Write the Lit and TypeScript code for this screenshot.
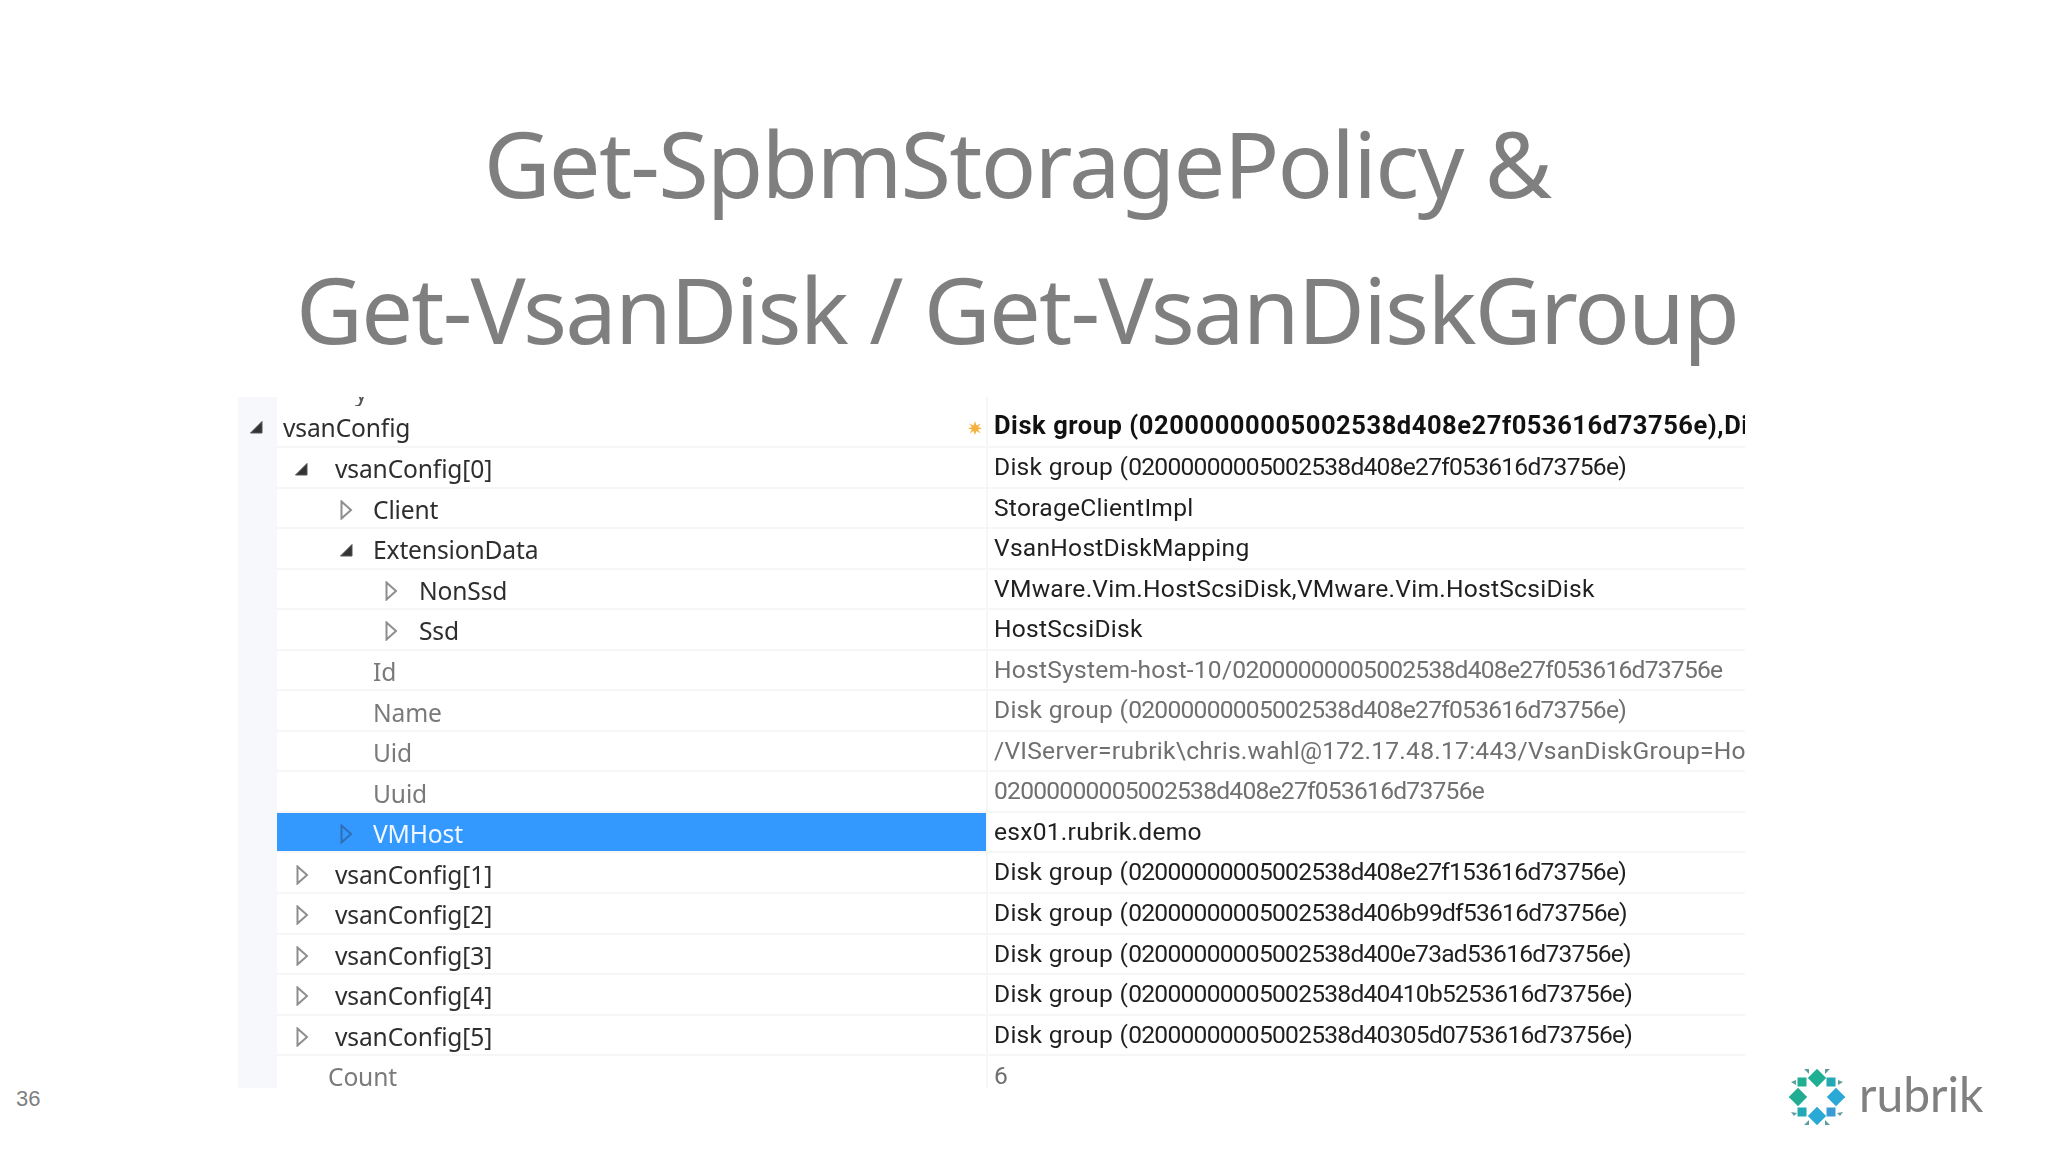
import { LitElement, css, html, svg } from 'lit';
import { customElement } from 'lit/decorators.js';

type Icon = 'open' | 'closed' | '';

interface TreeRow {
  key: string;
  value: string;
  icon: Icon;
  iconAt: number;
  textAt: number;
  dim?: boolean;
  selected?: boolean;
}

const GROUP = 'Disk group (02000000005002538d408e27f053616d73756e)';

const ROWS: TreeRow[] = [
  { key: 'vsanConfig[0]', value: GROUP, icon: 'open', iconAt: 17, textAt: 58 },
  { key: 'Client', value: 'StorageClientImpl', icon: 'closed', iconAt: 63, textAt: 96 },
  { key: 'ExtensionData', value: 'VsanHostDiskMapping', icon: 'open', iconAt: 62, textAt: 96 },
  { key: 'NonSsd', value: 'VMware.Vim.HostScsiDisk,VMware.Vim.HostScsiDisk', icon: 'closed', iconAt: 108, textAt: 142 },
  { key: 'Ssd', value: 'HostScsiDisk', icon: 'closed', iconAt: 108, textAt: 142 },
  { key: 'Id', value: 'HostSystem-host-10/02000000005002538d408e27f053616d73756e', icon: '', iconAt: 0, textAt: 96, dim: true },
  { key: 'Name', value: GROUP, icon: '', iconAt: 0, textAt: 96, dim: true },
  { key: 'Uid', value: '/VIServer=rubrik\\chris.wahl@172.17.48.17:443/VsanDiskGroup=HostSystem-host-10', icon: '', iconAt: 0, textAt: 96, dim: true },
  { key: 'Uuid', value: '02000000005002538d408e27f053616d73756e', icon: '', iconAt: 0, textAt: 96, dim: true },
  { key: 'VMHost', value: 'esx01.rubrik.demo', icon: 'closed', iconAt: 63, textAt: 96, selected: true },
  { key: 'vsanConfig[1]', value: 'Disk group (02000000005002538d408e27f153616d73756e)', icon: 'closed', iconAt: 19, textAt: 58 },
  { key: 'vsanConfig[2]', value: 'Disk group (02000000005002538d406b99df53616d73756e)', icon: 'closed', iconAt: 19, textAt: 58 },
  { key: 'vsanConfig[3]', value: 'Disk group (02000000005002538d400e73ad53616d73756e)', icon: 'closed', iconAt: 19, textAt: 58 },
  { key: 'vsanConfig[4]', value: 'Disk group (02000000005002538d40410b5253616d73756e)', icon: 'closed', iconAt: 19, textAt: 58 },
  { key: 'vsanConfig[5]', value: 'Disk group (02000000005002538d40305d0753616d73756e)', icon: 'closed', iconAt: 19, textAt: 58 },
];

// big diamonds, corner squares and the little arrowheads of the logo
const LOGO_DIAMONDS = [
  { x: 28, y: 9, fill: '#1fb094' },
  { x: 47, y: 28, fill: '#2aa8d6' },
  { x: 28, y: 47, fill: '#2aa8d6' },
  { x: 9, y: 28, fill: '#22ad92' },
];
const LOGO_SQUARES = [
  { x: 13, y: 13, fill: '#1fb094' },
  { x: 42, y: 13, fill: '#23a9b4' },
  { x: 42, y: 43, fill: '#3a9bd4' },
  { x: 13, y: 43, fill: '#23a9b4' },
];
const LOGO_TICKS = [
  '15,0 20,0 20,5',
  '41,0 36,0 36,5',
  '2,13 7,11 7,16',
  '54,13 49,11 49,16',
  '2,43 8,44 5,47',
  '54,43 48,44 51,47',
  '15,56 20,56 20,51',
  '41,56 36,56 36,51',
];

@customElement('app-root')
export class AppRoot extends LitElement {
  static styles = css`
    :host {
      display: block;
      width: 2048px;
      height: 1152px;
      background: #fff;
      overflow: hidden;
      font-family: 'Noto Sans', sans-serif;
    }

    .title {
      height: 397px;
      padding: 90px 14px 0 0;
      box-sizing: border-box;
      text-align: center;
      color: #7f7f7f;
      font-size: 92px;
      letter-spacing: -1.8px;
      line-height: 146px;
      filter: blur(0.4px);
    }

    .lower {
      display: grid;
      grid-template-columns: 238px 1507px 1fr;
      height: 755px;
      align-items: end;
    }

    .page-no {
      padding: 0 0 40px 16px;
      font: 22px/26px 'Liberation Sans', sans-serif;
      color: #7f7f7f;
    }

    .panel {
      align-self: start;
      height: 691px;
      overflow: hidden;
      filter: blur(0.35px);
    }

    .row {
      display: grid;
      grid-template-columns: 39px 709px 2px 1fr;
      height: 40.56px;
      box-sizing: border-box;
      border-bottom: 2px solid #f6f6f7;
      font-size: 24.6px;
      line-height: 30px;
      color: #2e2e2e;
    }

    .row.stub {
      height: 9px;
      border-bottom: 0;
    }

    .row.top {
      height: 42px;
    }

    .row.last {
      border-bottom: 0;
      height: 32px;
    }

    .gutter {
      background: #f7f8fc;
      display: flex;
      align-items: center;
      padding-left: 11px;
      margin-bottom: -2px;
    }

    .key {
      display: flex;
      align-items: center;
      padding-top: 4px;
      white-space: nowrap;
      overflow: hidden;
      letter-spacing: -0.15px;
    }

    .last .key {
      padding-top: 10px;
    }

    .stub .key {
      display: block;
      padding: 0 0 0 78px;
      margin-top: -15px;
      line-height: 20px;
      color: #555;
    }

    .slot {
      flex: none;
      display: flex;
      align-items: center;
    }

    .divider {
      background: #f6f6f7;
      margin-bottom: -2px;
    }

    .value {
      padding: 4px 0 0 6px;
      white-space: nowrap;
      overflow: hidden;
      font-family: Roboto, sans-serif;
      letter-spacing: 0.25px;
      color: #1f1f1f;
    }

    /* the ids are set tighter than the words around them */
    .hex {
      letter-spacing: -0.75px;
    }

    .last .value {
      padding: 5px 0 0 6px;
    }

    .dim {
      color: #7a7a7a;
    }

    .row .dim-value {
      color: #707070;
    }

    .selected .key {
      background: #3399ff;
      color: #f2f8ff;
    }

    .row .bold {
      font-size: 25.5px;
      font-weight: 700;
      letter-spacing: 0.55px;
      color: #111;
    }

    .modified {
      flex: none;
      margin-left: auto;
      margin-right: 4px;
    }

    .logo {
      display: flex;
      align-items: center;
      gap: 14px;
      padding: 0 0 24px 44px;
    }

    .wordmark {
      padding-bottom: 6px;
      font: 400 48px/56px Lato, sans-serif;
      color: #808080;
      filter: blur(0.5px);
    }

    svg {
      display: block;
    }
  `;

  render() {
    return html`
      <div class="title">Get-SpbmStoragePolicy &amp;<br />Get-VsanDisk / Get-VsanDiskGroup</div>
      <div class="lower">
        <div class="page-no">36</div>
        <div class="panel">
          <div class="row stub">
            <div class="gutter"></div>
            <div class="key">y</div>
            <div class="divider"></div>
            <div></div>
          </div>
          <div class="row top">
            <div class="gutter">${this.icon('open')}</div>
            <div class="key" style="padding-left:6px">vsanConfig${this.modifiedMark()}</div>
            <div class="divider"></div>
            <div class="value bold">Disk group (02000000005002538d408e27f053616d73756e),Disk group (02000000005002538d408e27f153616d73756e)</div>
          </div>
          ${ROWS.map((row) => this.renderRow(row))}
          <div class="row last dim">
            <div class="gutter"></div>
            <div class="key" style="padding-left:51px">Count</div>
            <div class="divider"></div>
            <div class="value dim-value">6</div>
          </div>
        </div>
        <div class="logo">
          ${this.logoMark()}
          <div class="wordmark">rubrik</div>
        </div>
      </div>
    `;
  }

  private renderRow(row: TreeRow) {
    const classes = `row ${row.dim ? 'dim' : ''} ${row.selected ? 'selected' : ''}`;
    return html`<div class=${classes}>
      <div class="gutter"></div>
      <div class="key" style="padding-left:${row.icon ? row.iconAt : row.textAt}px">
        ${row.icon
          ? html`<span class="slot" style="width:${row.textAt - row.iconAt}px">${this.icon(row.icon, row.selected)}</span>`
          : ''}
        ${row.key}
      </div>
      <div class="divider"></div>
      <div class="value ${row.dim ? 'dim-value' : ''}">${this.valueText(row.value)}</div>
    </div>`;
  }

  private valueText(value: string) {
    return value
      .split(/([0-9a-f]{20,})/)
      .map((part, i) => (i % 2 ? html`<span class="hex">${part}</span>` : part));
  }

  private icon(kind: Icon, selected = false) {
    if (kind === 'open') {
      return html`<svg width="14" height="14" viewBox="0 0 14 14">
        <path d="M13 1.5 V13 H1.5 Z" fill="#333" stroke="#555" stroke-width="1" />
      </svg>`;
    }
    return html`<svg width="13" height="20" viewBox="0 0 13 20">
      <path d="M1.5 1.5 L11 10 L1.5 18.5 Z" fill="none" stroke=${selected ? '#2f6fb5' : '#8e8e8e'} stroke-width="2" />
    </svg>`;
  }

  private modifiedMark() {
    return html`<svg class="modified" width="14" height="14" viewBox="0 0 14 14">
      <path d="M7 0 L8.5 4.5 L13 2.5 L10 6 L14 7.5 L10 8.5 L12.5 12.5 L8.5 10 L7 14 L5.5 10 L1.5 12.5 L4 8.5 L0 7.5 L4 6 L1 2.5 L5.5 4.5 Z" fill="#f5b13c" />
    </svg>`;
  }

  private logoMark() {
    return html`<svg width="56" height="56" viewBox="0 0 56 56">
      ${LOGO_DIAMONDS.map(
        (d) => svg`<rect x=${d.x - 6.5} y=${d.y - 6.5} width="13" height="13" fill=${d.fill} transform="rotate(45 ${d.x} ${d.y})" />`,
      )}
      ${LOGO_SQUARES.map(
        (s) => svg`<rect x=${s.x - 4.5} y=${s.y - 4.5} width="9" height="9" fill=${s.fill} />`,
      )}
      ${LOGO_TICKS.map((p) => svg`<polygon points=${p} fill="#5f9e9c" />`)}
    </svg>`;
  }
}

declare global {
  interface HTMLElementTagNameMap {
    'app-root': AppRoot;
  }
}
